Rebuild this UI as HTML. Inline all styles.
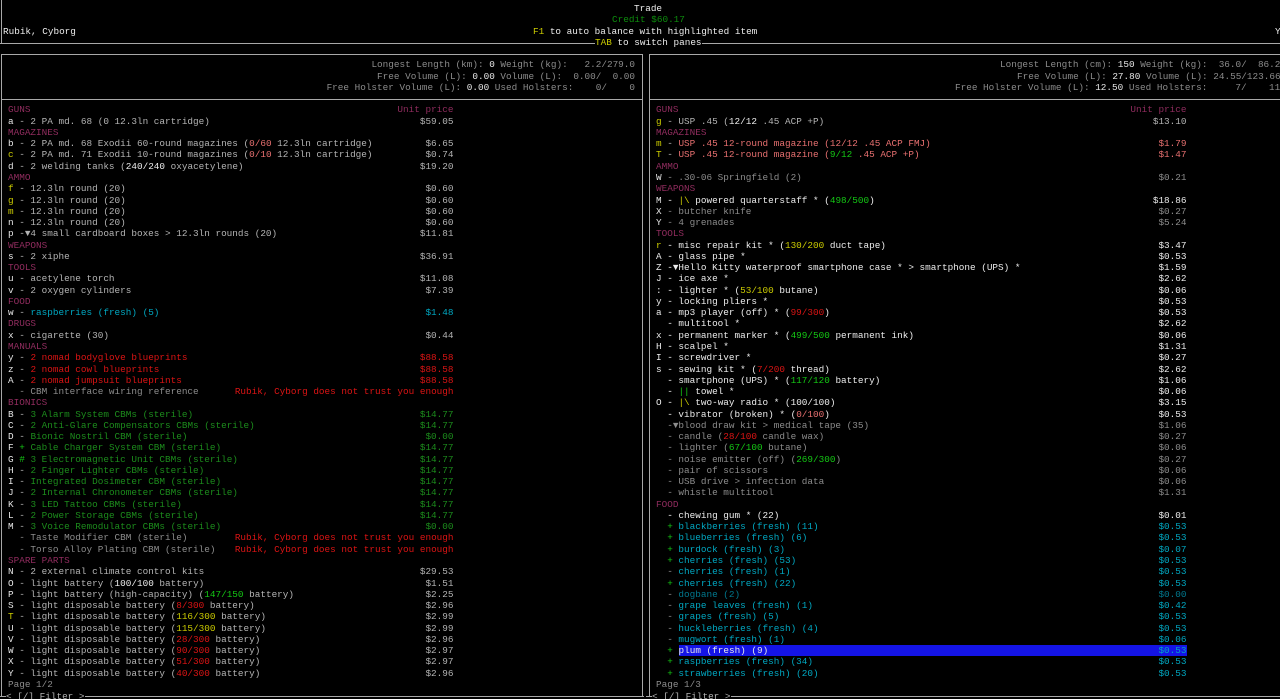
<!DOCTYPE html>
<html><head><meta charset="utf-8"><style>
html,body{margin:0;padding:0;background:#000;width:1280px;height:699px;overflow:hidden;position:relative}
body{font-family:"Liberation Mono","DejaVu Sans Mono",monospace;font-size:9.36px;color:#b4b4b4;white-space:normal}
.a{position:absolute;line-height:11.27px;height:11.27px;white-space:pre}
.pane{position:absolute;top:104.4px}
.pane div{position:relative;height:11.27px;line-height:11.27px;white-space:pre}
.pane div .p{position:absolute;right:0;top:0}
.k{color:#e6e6e6}.y{color:#cccc00}.m{color:#902c5e}.r{color:#dc1414}.lr{color:#e87070}
.g{color:#14c814}.dg{color:#1c8c1c}.c{color:#00a8c2}.dc{color:#00788e}.w{color:#ececec}
.d{color:#8c8c8c}.cr{color:#0c8c0c}
.ln{position:absolute;background:#a8a8a8}
.sel{background:#1414e6;color:#e8e8e8}
</style></head><body>
<div class="ln" style="left:1px;top:0;width:1px;height:43px"></div>
<div class="ln" style="left:0;top:43px;width:1280px;height:1px"></div>
<div class="ln" style="left:1px;top:54px;width:642px;height:1px"></div>
<div class="ln" style="left:1px;top:99px;width:642px;height:1px"></div>
<div class="ln" style="left:0;top:696px;width:644px;height:1px"></div>
<div class="ln" style="left:1px;top:54px;width:1px;height:643px"></div>
<div class="ln" style="left:642px;top:54px;width:1px;height:643px"></div>
<div class="ln" style="left:649px;top:54px;width:631px;height:1px"></div>
<div class="ln" style="left:649px;top:99px;width:631px;height:1px"></div>
<div class="ln" style="left:646px;top:696px;width:634px;height:1px"></div>
<div class="ln" style="left:649px;top:54px;width:1px;height:643px"></div>

<div class="a w" style="left:634px;top:3px">Trade</div>
<div class="a cr" style="left:612px;top:14.3px">Credit $60.17</div>
<div class="a w" style="left:3px;top:25.5px">Rubik, Cyborg</div>
<div class="a w" style="left:533px;top:25.5px"><span class="y">F1</span> to auto balance with highlighted item</div>
<div class="a w" style="left:1275px;top:25.5px">Y</div>
<div class="a w" style="left:595px;top:36.8px;background:#000"><span class="y">TAB</span> to switch panes</div>

<div class="a d" style="right:645px;top:59.4px">Longest Length (km): <span class="k">0</span> Weight (kg):   2.2/279.0</div>
<div class="a d" style="right:645px;top:70.7px">Free Volume (L): <span class="k">0.00</span> Volume (L):  0.00/  0.00</div>
<div class="a d" style="right:645px;top:82px">Free Holster Volume (L): <span class="k">0.00</span> Used Holsters:    0/    0</div>
<div class="a d" style="left:1000px;top:59.4px">Longest Length (cm): <span class="k">150</span> Weight (kg):  36.0/  86.2</div>
<div class="a d" style="left:1017px;top:70.7px">Free Volume (L): <span class="k">27.80</span> Volume (L): 24.55/123.66</div>
<div class="a d" style="left:955px;top:82px">Free Holster Volume (L): <span class="k">12.50</span> Used Holsters:     7/    11</div>

<div class="pane" style="left:8px;width:445.5px">
<div class="m">GUNS<span class="p">Unit price</span></div>
<div><span class="k">a</span> - 2 PA md. 68 (0 12.3ln cartridge)<span class="p">$59.05</span></div>
<div class="m">MAGAZINES</div>
<div><span class="k">b</span> - 2 PA md. 68 Exodii 60-round magazines (<span class="lr">0/60</span> 12.3ln cartridge)<span class="p">$6.65</span></div>
<div><span class="y">c</span> - 2 PA md. 71 Exodii 10-round magazines (<span class="lr">0/10</span> 12.3ln cartridge)<span class="p">$0.74</span></div>
<div><span class="k">d</span> - 2 welding tanks (<span class="w">240/240</span> oxyacetylene)<span class="p">$19.20</span></div>
<div class="m">AMMO</div>
<div><span class="y">f</span> - 12.3ln round (20)<span class="p">$0.60</span></div>
<div><span class="y">g</span> - 12.3ln round (20)<span class="p">$0.60</span></div>
<div><span class="y">m</span> - 12.3ln round (20)<span class="p">$0.60</span></div>
<div><span class="k">n</span> - 12.3ln round (20)<span class="p">$0.60</span></div>
<div><span class="k">p</span> -▼4 small cardboard boxes &gt; 12.3ln rounds (20)<span class="p">$11.81</span></div>
<div class="m">WEAPONS</div>
<div><span class="k">s</span> - 2 xiphe<span class="p">$36.91</span></div>
<div class="m">TOOLS</div>
<div><span class="k">u</span> - acetylene torch<span class="p">$11.08</span></div>
<div><span class="k">v</span> - 2 oxygen cylinders<span class="p">$7.39</span></div>
<div class="m">FOOD</div>
<div><span class="k">w</span> - <span class="c">raspberries (fresh) (5)</span><span class="p c">$1.48</span></div>
<div class="m">DRUGS</div>
<div><span class="k">x</span> - cigarette (30)<span class="p">$0.44</span></div>
<div class="m">MANUALS</div>
<div><span class="k">y</span> - <span class="r">2 nomad bodyglove blueprints</span><span class="p r">$88.58</span></div>
<div><span class="k">z</span> - <span class="r">2 nomad cowl blueprints</span><span class="p r">$88.58</span></div>
<div><span class="k">A</span> - <span class="r">2 nomad jumpsuit blueprints</span><span class="p r">$88.58</span></div>
<div class="d">  - CBM interface wiring reference<span class="p r">Rubik, Cyborg does not trust you enough</span></div>
<div class="m">BIONICS</div>
<div><span class="k">B</span> - <span class="dg">3 Alarm System CBMs (sterile)</span><span class="p dg">$14.77</span></div>
<div><span class="k">C</span> - <span class="dg">2 Anti-Glare Compensators CBMs (sterile)</span><span class="p dg">$14.77</span></div>
<div><span class="k">D</span> - <span class="dg">Bionic Nostril CBM (sterile)</span><span class="p dg">$0.00</span></div>
<div><span class="k">F</span> <span class="g">+</span> <span class="dg">Cable Charger System CBM (sterile)</span><span class="p dg">$14.77</span></div>
<div><span class="k">G</span> <span class="g">#</span> <span class="dg">3 Electromagnetic Unit CBMs (sterile)</span><span class="p dg">$14.77</span></div>
<div><span class="k">H</span> - <span class="dg">2 Finger Lighter CBMs (sterile)</span><span class="p dg">$14.77</span></div>
<div><span class="k">I</span> - <span class="dg">Integrated Dosimeter CBM (sterile)</span><span class="p dg">$14.77</span></div>
<div><span class="k">J</span> - <span class="dg">2 Internal Chronometer CBMs (sterile)</span><span class="p dg">$14.77</span></div>
<div><span class="k">K</span> - <span class="dg">3 LED Tattoo CBMs (sterile)</span><span class="p dg">$14.77</span></div>
<div><span class="k">L</span> - <span class="dg">2 Power Storage CBMs (sterile)</span><span class="p dg">$14.77</span></div>
<div><span class="k">M</span> - <span class="dg">3 Voice Remodulator CBMs (sterile)</span><span class="p dg">$0.00</span></div>
<div class="d">  - Taste Modifier CBM (sterile)<span class="p r">Rubik, Cyborg does not trust you enough</span></div>
<div class="d">  - Torso Alloy Plating CBM (sterile)<span class="p r">Rubik, Cyborg does not trust you enough</span></div>
<div class="m">SPARE PARTS</div>
<div><span class="k">N</span> - 2 external climate control kits<span class="p">$29.53</span></div>
<div><span class="k">O</span> - light battery (<span class="w">100/100</span> battery)<span class="p">$1.51</span></div>
<div><span class="k">P</span> - light battery (high-capacity) (<span class="g">147/150</span> battery)<span class="p">$2.25</span></div>
<div><span class="k">S</span> - light disposable battery (<span class="r">8/300</span> battery)<span class="p">$2.96</span></div>
<div><span class="y">T</span> - light disposable battery (<span class="y">116/300</span> battery)<span class="p">$2.99</span></div>
<div><span class="k">U</span> - light disposable battery (<span class="y">115/300</span> battery)<span class="p">$2.99</span></div>
<div><span class="k">V</span> - light disposable battery (<span class="r">28/300</span> battery)<span class="p">$2.96</span></div>
<div><span class="k">W</span> - light disposable battery (<span class="r">90/300</span> battery)<span class="p">$2.97</span></div>
<div><span class="k">X</span> - light disposable battery (<span class="r">51/300</span> battery)<span class="p">$2.97</span></div>
<div><span class="k">Y</span> - light disposable battery (<span class="r">40/300</span> battery)<span class="p">$2.96</span></div>
<div class="d">Page 1/2</div>
</div>
<div class="a" style="left:6px;top:690.5px;background:#000">&lt; [/] Filter &gt;</div>

<div class="pane" style="left:656px;width:530.5px">
<div class="m">GUNS<span class="p">Unit price</span></div>
<div><span class="y">g</span> - USP .45 (<span class="w">12/12</span> .45 ACP +P)<span class="p">$13.10</span></div>
<div class="m">MAGAZINES</div>
<div><span class="y">m</span> - <span class="lr">USP .45 12-round magazine (12/12 .45 ACP FMJ)</span><span class="p lr">$1.79</span></div>
<div><span class="y">T</span> - <span class="lr">USP .45 12-round magazine (</span><span class="g">9/12</span><span class="lr"> .45 ACP +P)</span><span class="p lr">$1.47</span></div>
<div class="m">AMMO</div>
<div class="d"><span class="k">W</span> - .30-06 Springfield (2)<span class="p">$0.21</span></div>
<div class="m">WEAPONS</div>
<div class="w"><span class="k">M</span> - <span class="y">|\</span> powered quarterstaff * (<span class="g">498/500</span>)<span class="p">$18.86</span></div>
<div class="d"><span class="k">X</span> - butcher knife<span class="p">$0.27</span></div>
<div class="d"><span class="k">Y</span> - 4 grenades<span class="p">$5.24</span></div>
<div class="m">TOOLS</div>
<div class="w"><span class="y">r</span> - misc repair kit * (<span class="y">130/200</span> duct tape)<span class="p">$3.47</span></div>
<div class="w">A - glass pipe *<span class="p">$0.53</span></div>
<div class="w">Z -▼Hello Kitty waterproof smartphone case * &gt; smartphone (UPS) *<span class="p">$1.59</span></div>
<div class="w">J - ice axe *<span class="p">$2.62</span></div>
<div class="w">: - lighter * (<span class="y">53/100</span> butane)<span class="p">$0.06</span></div>
<div class="w">y - locking pliers *<span class="p">$0.53</span></div>
<div class="w">a - mp3 player (off) * (<span class="r">99/300</span>)<span class="p">$0.53</span></div>
<div class="w">  - multitool *<span class="p">$2.62</span></div>
<div class="w">x - permanent marker * (<span class="g">499/500</span> permanent ink)<span class="p">$0.06</span></div>
<div class="w">H - scalpel *<span class="p">$1.31</span></div>
<div class="w">I - screwdriver *<span class="p">$0.27</span></div>
<div class="w">s - sewing kit * (<span class="r">7/200</span> thread)<span class="p">$2.62</span></div>
<div class="w">  - smartphone (UPS) * (<span class="g">117/120</span> battery)<span class="p">$1.06</span></div>
<div class="w">  - <span class="g">||</span> towel *<span class="p">$0.06</span></div>
<div class="w">O - <span class="y">|\</span> two-way radio * (100/100)<span class="p">$3.15</span></div>
<div class="w">  - vibrator (broken) * (<span class="lr">0/100</span>)<span class="p">$0.53</span></div>
<div class="d">  -▼blood draw kit &gt; medical tape (35)<span class="p">$1.06</span></div>
<div class="d">  - candle (<span class="r">28/100</span> candle wax)<span class="p">$0.27</span></div>
<div class="d">  - lighter (<span class="g">67/100</span> butane)<span class="p">$0.06</span></div>
<div class="d">  - noise emitter (off) (<span class="g">269/300</span>)<span class="p">$0.27</span></div>
<div class="d">  - pair of scissors<span class="p">$0.06</span></div>
<div class="d">  - USB drive &gt; infection data<span class="p">$0.06</span></div>
<div class="d">  - whistle multitool<span class="p">$1.31</span></div>
<div class="m">FOOD</div>
<div class="w">  - chewing gum * (22)<span class="p">$0.01</span></div>
<div class="c"><span class="g">  +</span> blackberries (fresh) (11)<span class="p">$0.53</span></div>
<div class="c"><span class="g">  +</span> blueberries (fresh) (6)<span class="p">$0.53</span></div>
<div class="c"><span class="g">  +</span> burdock (fresh) (3)<span class="p">$0.07</span></div>
<div class="c"><span class="g">  +</span> cherries (fresh) (53)<span class="p">$0.53</span></div>
<div class="c"><span class="d">  -</span> cherries (fresh) (1)<span class="p">$0.53</span></div>
<div class="c"><span class="g">  +</span> cherries (fresh) (22)<span class="p">$0.53</span></div>
<div class="dc"><span class="d">  -</span> dogbane (2)<span class="p">$0.00</span></div>
<div class="c"><span class="d">  -</span> grape leaves (fresh) (1)<span class="p">$0.42</span></div>
<div class="c"><span class="d">  -</span> grapes (fresh) (5)<span class="p">$0.53</span></div>
<div class="c"><span class="d">  -</span> huckleberries (fresh) (4)<span class="p">$0.53</span></div>
<div class="c"><span class="d">  -</span> mugwort (fresh) (1)<span class="p">$0.06</span></div>
<div class="c"><span class="g">  +</span> <span class="sel" style="position:absolute;left:22.5px;right:0;top:0;height:11.27px">plum (fresh) (9)</span><span class="p c" style="z-index:2">$0.53</span></div>
<div class="c"><span class="g">  +</span> raspberries (fresh) (34)<span class="p">$0.53</span></div>
<div class="c"><span class="g">  +</span> strawberries (fresh) (20)<span class="p">$0.53</span></div>
<div class="d">Page 1/3</div>
</div>
<div class="a" style="left:652px;top:690.5px;background:#000">&lt; [/] Filter &gt;</div>
</body></html>
